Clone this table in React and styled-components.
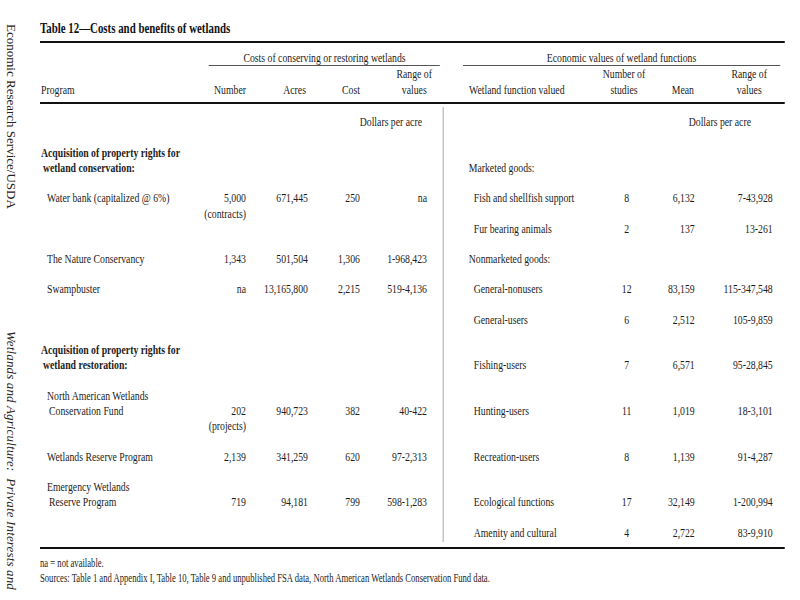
import React from "react";
import styled, { createGlobalStyle } from "styled-components";

// the scanned page is squeezed sideways, so the sheet is drawn wide and scaled back
const S = 0.75;
const u = (px) => px / S; // page px -> sheet px
const LINE = 15.2;

const GlobalStyle = createGlobalStyle`
  html, body {
    margin: 0;
    padding: 0;
    background: #fff;
    overflow: hidden;
  }
  body {
    font-family: "Liberation Serif", "Times New Roman", serif;
    color: #1c1c1c;
  }
`;

const Page = styled.div`
  display: flex;
  width: 800px;
  height: 600px;
  overflow: hidden;
  background: #fff;
`;

const Margin = styled.div`
  width: 40px;
  flex-shrink: 0;
  display: grid;
  grid-template-rows: 300px 300px;
`;

const SideSlot = styled.div`
  display: flex;
  padding-top: ${(p) => p.$top}px;
  padding-left: 4px;
  overflow: hidden;
`;

const SideNote = styled.div`
  writing-mode: vertical-rl;
  white-space: nowrap;
  font-size: 13px;
  line-height: 15px;
  font-style: ${(p) => (p.$italic ? "italic" : "normal")};
  letter-spacing: ${(p) => (p.$italic ? "0.15px" : "0")};
  color: #222;
`;

const Sheet = styled.div`
  width: ${u(745)}px;
  flex-shrink: 0;
  padding-top: 20px;
  transform: scaleX(${S});
  transform-origin: 0 0;
`;

const Title = styled.h1`
  margin: 0 0 5px;
  font-size: 14.5px;
  line-height: 16px;
  font-weight: bold;
  color: #111;
`;

const Head = styled.div`
  border-top: 2px solid #111;
  border-bottom: 2px solid #111;
  padding: 8px 0 5px;
`;

const GroupRow = styled.div`
  display: flex;
`;

const Group = styled.div`
  margin-left: ${(p) => u(p.$left)}px;
  width: ${(p) => u(p.$w)}px;
  flex-shrink: 0;
  text-align: center;
  font-size: 13px;
  line-height: 14px;
  border-bottom: 1px solid #555;
`;

const ColRow = styled.div`
  display: flex;
  align-items: flex-end;
  font-size: 13px;
  line-height: 15.5px;
  white-space: nowrap;
`;

const HeadCell = styled.div`
  width: ${(p) => u(p.$w)}px;
  flex-shrink: 0;
  display: flex;
  justify-content: ${(p) =>
    p.$align === "right" ? "flex-end" : p.$align === "center" ? "center" : "flex-start"};
  padding-left: ${(p) => u(p.$pl || 0)}px;
  box-sizing: border-box;
`;

const Stack = styled.span`
  display: inline-block;
  text-align: center;
`;

const Body = styled.div`
  display: flex;
  margin-top: 3px;
`;

const Panel = styled.div`
  width: ${(p) => u(p.$w)}px;
  height: 435px;
  flex-shrink: 0;
  box-sizing: border-box;
  padding-top: 7.4px;
  border-left: ${(p) => (p.$rule ? `${u(1)}px solid #8a8a8a` : "none")};
`;

const Line = styled.div`
  display: flex;
  justify-content: ${(p) => (p.$end ? "flex-end" : "flex-start")};
  padding-right: ${(p) => u(p.$pr || 0)}px;
  height: ${LINE}px;
  line-height: ${LINE}px;
  margin-top: ${(p) => (p.$skip || 0) * LINE}px;
  font-size: 13px;
  white-space: nowrap;
`;

const Cell = styled.div`
  width: ${(p) => u(p.$w)}px;
  flex-shrink: 0;
  box-sizing: border-box;
  text-align: ${(p) => p.$align || "left"};
  padding-left: ${(p) => u(p.$pl || 0)}px;
  font-weight: ${(p) => (p.$bold ? "bold" : "normal")};
`;

const Foot = styled.div`
  margin-top: 5px;
  border-top: 2px solid #111;
  padding-top: 7px;
  font-size: 11.5px;
  line-height: 15px;
  white-space: nowrap;
`;

// column widths in page px
const LEFT = [160, 46, 62, 52, 67];
const RIGHT = [157, 52, 42, 78];

const leftRows = [
  { k: 2, label: "Acquisition of property rights for", bold: true, pl: 1 },
  { k: 3, label: "wetland conservation:", bold: true, pl: 3 },
  { k: 5, label: "Water bank (capitalized @ 6%)", pl: 7, vals: ["5,000", "671,445", "250", "na"] },
  { k: 6, vals: ["(contracts)", "", "", ""] },
  { k: 9, label: "The Nature Conservancy", pl: 7, vals: ["1,343", "501,504", "1,306", "1-968,423"] },
  { k: 11, label: "Swampbuster", pl: 7, vals: ["na", "13,165,800", "2,215", "519-4,136"] },
  { k: 15, label: "Acquisition of property rights for", bold: true, pl: 1 },
  { k: 16, label: "wetland restoration:", bold: true, pl: 3 },
  { k: 18, label: "North American Wetlands", pl: 7 },
  { k: 19, label: "Conservation Fund", pl: 9, vals: ["202", "940,723", "382", "40-422"] },
  { k: 20, vals: ["(projects)", "", "", ""] },
  { k: 22, label: "Wetlands Reserve Program", pl: 7, vals: ["2,139", "341,259", "620", "97-2,313"] },
  { k: 24, label: "Emergency Wetlands", pl: 7 },
  { k: 25, label: "Reserve Program", pl: 9, vals: ["719", "94,181", "799", "598-1,283"] },
];

const rightRows = [
  { k: 3, label: "Marketed goods:", pl: 25 },
  { k: 5, label: "Fish and shellfish support", pl: 30, vals: ["8", "6,132", "7-43,928"] },
  { k: 7, label: "Fur bearing animals", pl: 30, vals: ["2", "137", "13-261"] },
  { k: 9, label: "Nonmarketed goods:", pl: 25 },
  { k: 11, label: "General-nonusers", pl: 30, vals: ["12", "83,159", "115-347,548"] },
  { k: 13, label: "General-users", pl: 30, vals: ["6", "2,512", "105-9,859"] },
  { k: 16, label: "Fishing-users", pl: 30, vals: ["7", "6,571", "95-28,845"] },
  { k: 19, label: "Hunting-users", pl: 30, vals: ["11", "1,019", "18-3,101"] },
  { k: 22, label: "Recreation-users", pl: 30, vals: ["8", "1,139", "91-4,287"] },
  { k: 25, label: "Ecological functions", pl: 30, vals: ["17", "32,149", "1-200,994"] },
  { k: 27, label: "Amenity and cultural", pl: 30, vals: ["4", "2,722", "83-9,910"] },
];

function Rows({ rows, cols, centerFirst }) {
  let prev = 0;
  return rows.map((r) => {
    const skip = r.k - prev - 1;
    prev = r.k;
    return (
      <Line key={r.k} $skip={skip}>
        <Cell $w={cols[0]} $pl={r.pl} $bold={r.bold}>
          {r.label || ""}
        </Cell>
        {(r.vals || []).map((v, i) => (
          <Cell
            key={i}
            $w={cols[i + 1]}
            $align={centerFirst && i === 0 ? "center" : "right"}
          >
            {v}
          </Cell>
        ))}
      </Line>
    );
  });
}

export default function App() {
  return (
    <>
      <GlobalStyle />
      <Page>
        <Margin>
          <SideSlot $top={24}>
            <SideNote>Economic Research Service/USDA</SideNote>
          </SideSlot>
          <SideSlot $top={31}>
            <SideNote $italic>Wetlands and Agriculture:&nbsp; Private Interests and</SideNote>
          </SideSlot>
        </Margin>

        <Sheet>
          <Title>Table 12—Costs and benefits of wetlands</Title>

          <Head>
            <GroupRow>
              <Group $left={169} $w={231}>
                Costs of conserving or restoring wetlands
              </Group>
              <Group $left={23} $w={317}>
                Economic values of wetland functions
              </Group>
            </GroupRow>
            <ColRow>
              <HeadCell $w={LEFT[0]} $pl={1}>Program</HeadCell>
              <HeadCell $w={LEFT[1]} $align="right">Number</HeadCell>
              <HeadCell $w={LEFT[2] - 2} $align="right">Acres</HeadCell>
              <HeadCell $w={LEFT[3] + 2} $align="right">Cost</HeadCell>
              <HeadCell $w={72} $align="right">
                <Stack>
                  Range of
                  <br />
                  values
                </Stack>
              </HeadCell>
              <HeadCell $w={11} />
              <HeadCell $w={RIGHT[0]} $pl={26}>Wetland function valued</HeadCell>
              <HeadCell $w={RIGHT[1] - 4} $align="center">
                <Stack>
                  Number of
                  <br />
                  studies
                </Stack>
              </HeadCell>
              <HeadCell $w={RIGHT[2] + 4} $align="right">Mean</HeadCell>
              <HeadCell $w={73} $align="right">
                <Stack>
                  Range of
                  <br />
                  values
                </Stack>
              </HeadCell>
            </ColRow>
          </Head>

          <Body>
            <Panel $w={403}>
              <Line $end $pr={21}>Dollars per acre</Line>
              <Rows rows={leftRows} cols={LEFT} />
            </Panel>
            <Panel $w={342} $rule>
              <Line $end $pr={34}>Dollars per acre</Line>
              <Rows rows={rightRows} cols={RIGHT} centerFirst />
            </Panel>
          </Body>

          <Foot>
            <div>na = not available.</div>
            <div>
              Sources: Table 1 and Appendix I, Table 10, Table 9 and unpublished FSA data,
              North American Wetlands Conservation Fund data.
            </div>
          </Foot>
        </Sheet>
      </Page>
    </>
  );
}
